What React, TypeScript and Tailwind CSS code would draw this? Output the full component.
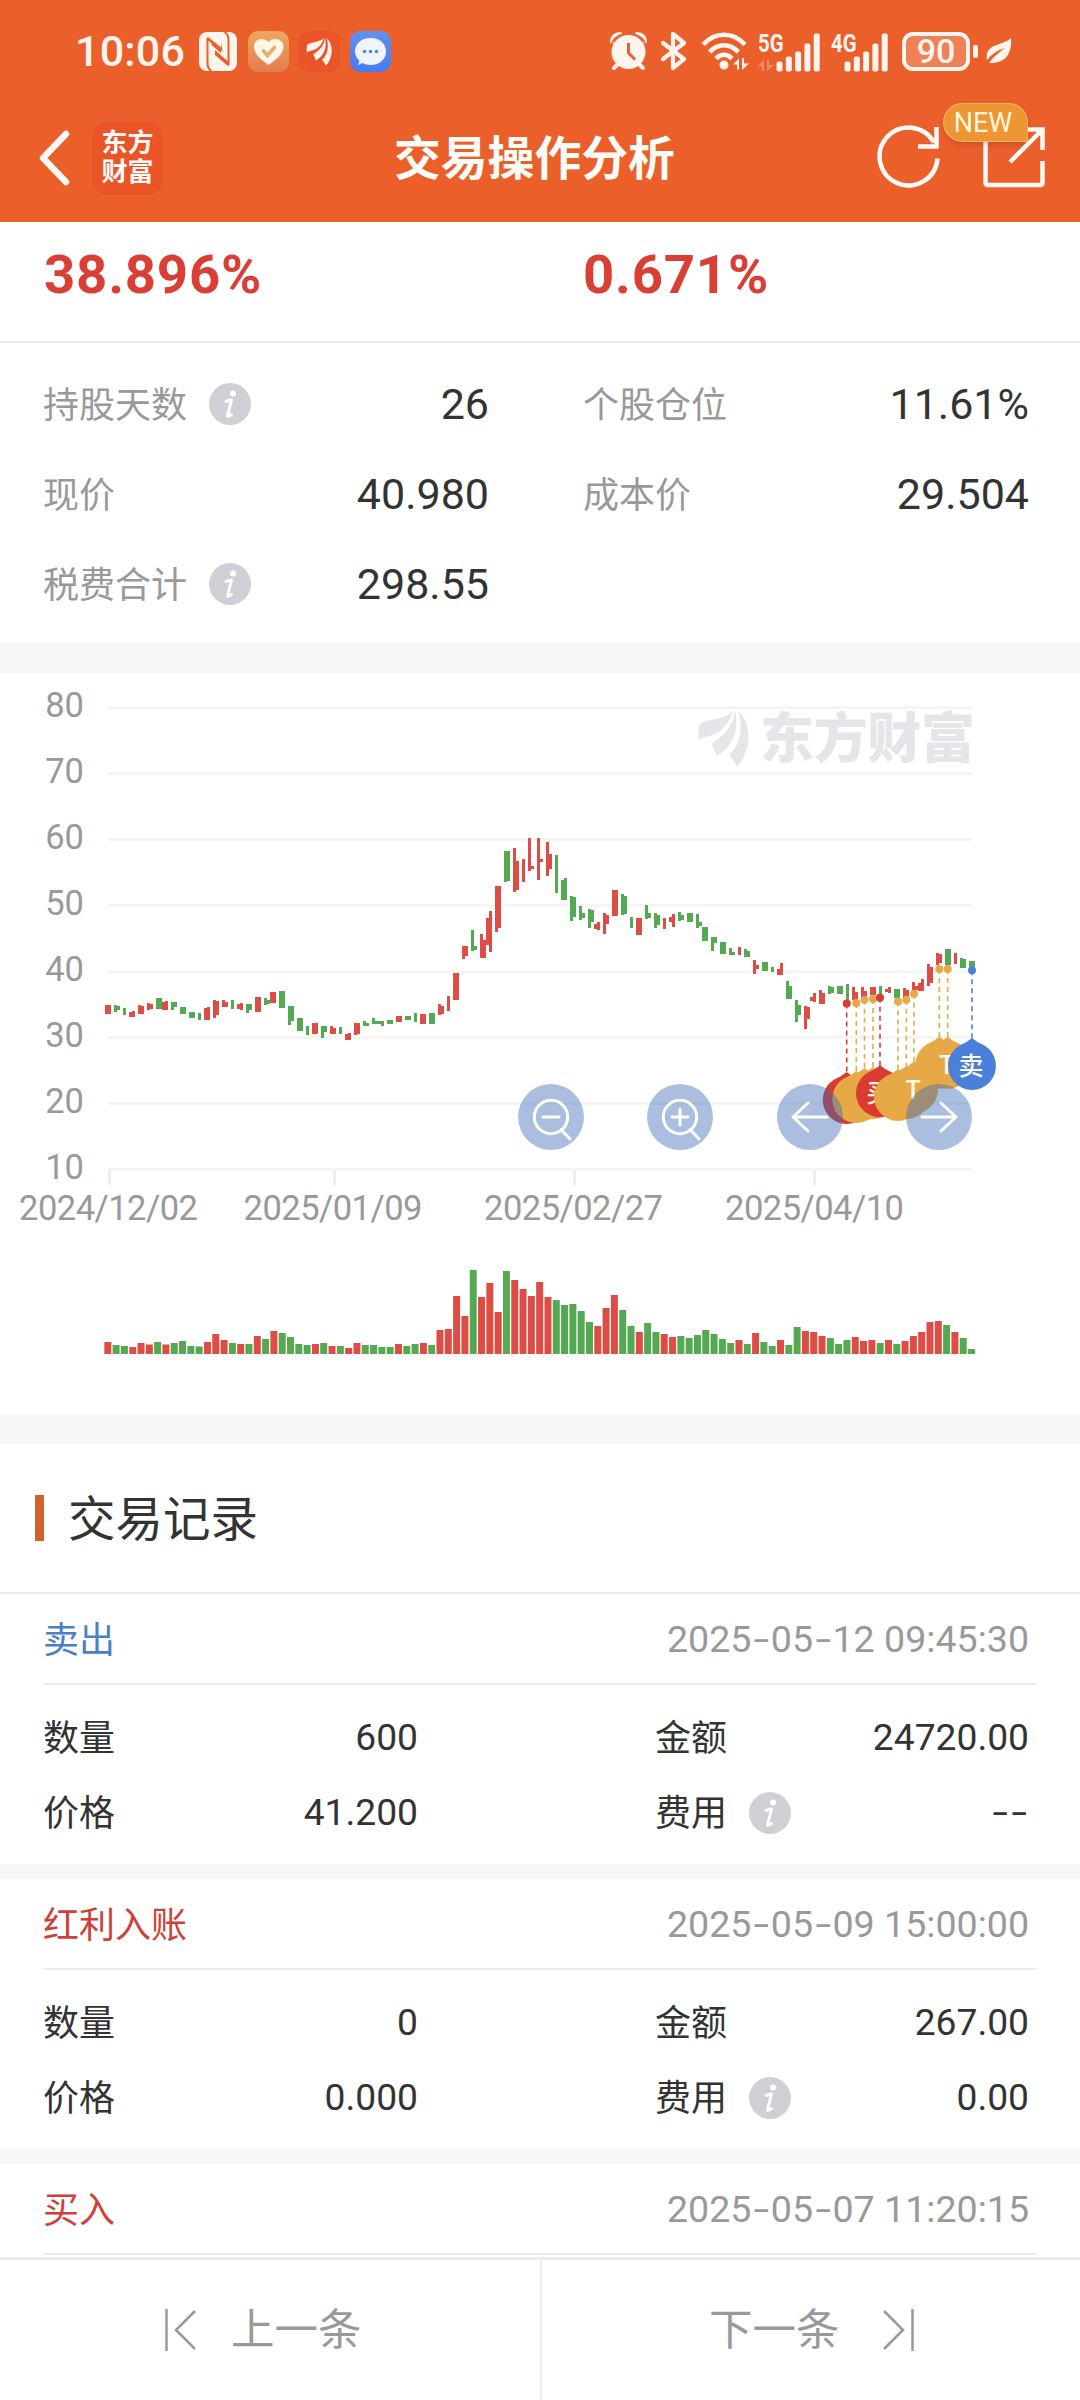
import { Fragment } from "react";

const UP = "#dd4d46";
const DOWN = "#56a953";
const ORANGE = "#e7a945";
const RED = "#da3b30";
const BLUE = "#4a80d9";

type Rect = [number, number, number, number];

// candle bodies and wicks, [x, y, width, height]
const upCandles: Rect[] = [
  [105, 1005, 6, 9],
  [129, 1012, 6, 5], [132, 1011, 3, 5],
  [138, 1006, 6, 8], [138, 1005, 3, 9],
  [147, 1004, 6, 5], [147, 1003, 3, 7],
  [162, 1002, 6, 8], [165, 1001, 3, 9],
  [204, 1008, 6, 12], [207, 1007, 3, 12],
  [213, 1000, 3, 18], [213, 1001, 6, 14],
  [222, 1002, 6, 5], [222, 1000, 3, 7],
  [237, 1004, 6, 5], [240, 1003, 3, 7],
  [255, 997, 6, 15],
  [270, 992, 6, 11],
  [312, 1023, 6, 11],
  [330, 1028, 6, 6], [330, 1026, 3, 8],
  [345, 1034, 6, 6], [348, 1033, 3, 7],
  [354, 1023, 6, 11], [354, 1023, 3, 12],
  [396, 1016, 6, 6],
  [420, 1014, 6, 10],
  [438, 1006, 6, 8], [438, 1004, 3, 11],
  [447, 996, 3, 15],
  [453, 973, 6, 27],
  [462, 946, 6, 10], [462, 946, 3, 13],
  [480, 940, 6, 18], [480, 934, 3, 24],
  [486, 918, 6, 27], [489, 911, 3, 41],
  [495, 886, 6, 42], [495, 886, 3, 46],
  [513, 848, 3, 44], [513, 861, 6, 29],
  [522, 859, 3, 23],
  [528, 838, 3, 33], [528, 866, 6, 3],
  [537, 838, 3, 42], [537, 859, 6, 3],
  [546, 842, 3, 34], [546, 854, 6, 15],
  [594, 924, 6, 5], [597, 922, 3, 8],
  [603, 915, 6, 9], [603, 913, 3, 21],
  [612, 890, 6, 26],
  [636, 918, 6, 17],
  [663, 918, 3, 11],
  [669, 917, 6, 5], [672, 914, 3, 13],
  [738, 947, 3, 8],
  [753, 960, 3, 14], [753, 965, 6, 4],
  [777, 969, 6, 6], [780, 963, 3, 12],
  [804, 1006, 3, 23], [804, 1007, 6, 12],
  [810, 997, 6, 4], [813, 993, 3, 9],
  [819, 993, 6, 11], [819, 990, 3, 14],
  [852, 992, 6, 8], [852, 987, 3, 13],
  [861, 991, 6, 8], [861, 987, 3, 12],
  [870, 987, 6, 8],
  [885, 989, 6, 3], [888, 987, 3, 6],
  [903, 990, 6, 7], [903, 988, 3, 9],
  [912, 982, 3, 9], [912, 986, 6, 4],
  [918, 983, 6, 8], [921, 979, 3, 12],
  [927, 964, 3, 22], [927, 967, 6, 16],
  [936, 954, 6, 9], [936, 953, 3, 12],
  [954, 953, 3, 11],
];

const downCandles: Rect[] = [
  [114, 1006, 6, 4], [114, 1005, 3, 7],
  [123, 1008, 3, 7],
  [156, 998, 6, 11],
  [171, 1002, 6, 5], [171, 1002, 3, 8],
  [180, 1007, 6, 7],
  [189, 1012, 6, 6],
  [198, 1013, 3, 7],
  [231, 1000, 3, 9],
  [246, 1004, 6, 6], [246, 1004, 3, 9],
  [264, 1000, 6, 4], [264, 998, 3, 7],
  [279, 991, 6, 17],
  [288, 1006, 6, 15], [288, 1006, 3, 19],
  [297, 1018, 6, 13],
  [306, 1026, 3, 9],
  [321, 1026, 6, 6], [321, 1026, 3, 12],
  [339, 1027, 3, 7],
  [363, 1023, 6, 3], [363, 1021, 3, 5],
  [372, 1018, 3, 6], [372, 1021, 9, 3],
  [378, 1021, 6, 3], [381, 1021, 3, 5],
  [387, 1020, 6, 4],
  [405, 1016, 6, 4],
  [414, 1013, 3, 9],
  [429, 1013, 6, 11],
  [471, 930, 3, 21], [474, 946, 3, 4],
  [504, 851, 6, 30], [504, 851, 3, 31],
  [555, 855, 3, 38],
  [561, 880, 6, 20], [564, 878, 3, 22],
  [570, 897, 6, 20], [570, 896, 3, 25],
  [579, 913, 6, 5], [579, 906, 3, 14],
  [588, 910, 6, 12], [588, 909, 3, 19],
  [621, 896, 6, 18], [621, 894, 3, 21],
  [630, 917, 3, 11],
  [645, 905, 3, 14], [645, 913, 6, 5],
  [654, 913, 3, 15], [654, 915, 6, 10],
  [678, 915, 6, 5], [678, 912, 3, 9],
  [687, 913, 6, 9],
  [696, 914, 3, 14], [696, 922, 6, 4],
  [702, 927, 6, 14],
  [711, 937, 6, 6], [711, 937, 3, 14],
  [720, 942, 6, 12],
  [729, 952, 6, 3], [729, 948, 3, 7],
  [744, 951, 6, 6], [744, 949, 3, 8],
  [762, 962, 6, 9],
  [771, 967, 3, 5],
  [786, 986, 6, 13], [786, 981, 3, 18],
  [795, 1000, 3, 22], [795, 1005, 6, 10],
  [828, 987, 6, 6], [828, 986, 3, 8],
  [837, 986, 6, 8],
  [846, 984, 3, 17],
  [879, 986, 3, 9],
  [894, 989, 6, 9],
  [945, 949, 6, 16],
  [960, 959, 6, 9], [960, 958, 3, 10],
  [969, 961, 6, 6],
];

// volume bar heights, u = up, d = down
const volume =
  "u12 d9 d8 u7 u11 u9.5 d12 u9.5 d11 d13 d8 d7.5 u12 u20 u14 d11 u10 d10 u18 d15 u23 d21 d17 d10 d9 u10 d11 u8 d8 u6 u11 d9 d9 d7 d7 u10 d8 d10 u11 d9 u24 u25 u58 u38 d84 u57 u71 u42 d83 u74 u65 u58 u72 u57 d54 d49 d50 d43 d32 u28 u46 u59 d44 d28 u22 d31 d22 u20 u17 d18 d16 d19 d24 d20 d15 d11 u14 d10 u21 d12 d8 u14 d9 d27 u23 u22 u18 d16 d10 d14 u17 u13 u14 d11 u14 d10 u13 u18 u22 u32 u33 d29 u22 d16 d5"
    .split(" ")
    .map((v) => ({ up: v[0] === "u", h: Number(v.slice(1)) }));

const marks = [
  { x: 846.7, dot: 1003.5, pin: 1100, color: RED, text: "买" },
  { x: 856.3, dot: 1003, pin: 1099, color: ORANGE, text: "" },
  { x: 864.5, dot: 999.7, pin: 1096, color: ORANGE, text: "" },
  { x: 873, dot: 999, pin: 1095, color: ORANGE, text: "" },
  { x: 880, dot: 997.7, pin: 1093.3, color: RED, text: "买" },
  { x: 898, dot: 1001.5, pin: 1097, color: ORANGE, text: "" },
  { x: 906.3, dot: 999.7, pin: 1095, color: ORANGE, text: "" },
  { x: 914, dot: 993.7, pin: 1089.5, color: ORANGE, text: "T" },
  { x: 939.3, dot: 969, pin: 1064.7, color: ORANGE, text: "" },
  { x: 947.7, dot: 969, pin: 1064.7, color: ORANGE, text: "T" },
  { x: 972, dot: 970.3, pin: 1066, color: BLUE, text: "卖" },
];

const records = [
  { type: "卖出", color: "text-[#4a7ec9]", time: "2025-05-12 09:45:30", count: "600", amount: "24720.00", price: "41.200", fee: "--" },
  { type: "红利入账", color: "text-[#cf4038]", time: "2025-05-09 15:00:00", count: "0", amount: "267.00", price: "0.000", fee: "0.00" },
];

function Feathers() {
  return (
    <>
      <path d="M733 711C726 719 710 719 702 722.5C698.5 724 697.500 732 699 739.600C708 734 724 738 733 711Z" />
      <path d="M735 710C734 727 722 737 711.700 743.600L716.700 756C731 747 740 734 735 710Z" />
      <path d="M738.500 711C743 727 741 744 729.300 754.500L737.300 766.500C751 750 753 726 738.500 711Z" />
    </>
  );
}

// the number font has a short hyphen, stretch it
function Dashed({ text }: { text: string }) {
  return (
    <span className="whitespace-pre">
      {text.split("").map((c, i) =>
        c === "-" ? <span key={i} className="mx-[4.500px] inline-block scale-x-150">-</span> : c
      )}
    </span>
  );
}

function InfoIcon() {
  return (
    <svg width="42" height="42" viewBox="0 0 42 42">
      <circle cx="21" cy="21" r="21" fill="#cfd0d5" />
      <circle cx="24" cy="10.500" r="3" fill="#fff" />
      <path d="M17 18.500c2.500-1 4.500-1.500 5.500-1.500l-4 15.500c0 1.500 1.500.5 4-1" fill="none" stroke="#fff" strokeWidth="3" strokeLinecap="round" strokeLinejoin="round" />
    </svg>
  );
}

function Signal({ label, className }: { label: string; className: string }) {
  return (
    <svg width="64" height="44" viewBox="0 -4 64 44" fill="#fff4ee" className={className}>
      <text x={label === "5G" ? 0 : 5} y="19" fontSize="26.500" fontWeight="700" textLength="25.500" lengthAdjust="spacingAndGlyphs">{label}</text>
      {[29, 24, 19, 11, 1].map((y, i) => (
        <rect key={y} x={18.500 + i * 9.300} y={y - 0.5} width="6" height={39 - y} rx="2" />
      ))}
      {label === "5G" && (
        <path d="M0 33l6-6.500v11.500h-2v-4.500zM9 27h2v5h5l-7 6.500z" opacity="0.3" />
      )}
    </svg>
  );
}

function StatusBar() {
  return (
    <div className="flex items-center h-[102px] pl-[75px] text-[#fff4ee]">
      <span className="w-[124px] text-[43px] font-medium leading-none tracking-[0.2px]">10:06</span>
      {/* nfc */}
      <svg width="38" height="39" viewBox="0 0 38 39">
        <rect width="38" height="39" rx="8" fill="#fff4ee" />
        <path d="M12.500 39C9 37 8.500 34.500 8.500 31V6" fill="none" stroke="#eb5f2b" strokeWidth="2" />
        <path d="M25.500 0C29 2 29.500 4.500 29.500 8v25" fill="none" stroke="#eb5f2b" strokeWidth="2" />
        <path d="M8.500 4.500L22 15.500V10l1.500 9.500L8.500 8z" fill="#eb5f2b" />
        <path d="M12.500 8.500L22 16.500v4.500L12.500 13z" fill="#eb5f2b" />
        <path d="M16 18l13.500 12v4.500L16 23z" fill="#eb5f2b" />
      </svg>
      {/* health */}
      <svg width="41" height="41" viewBox="0 0 41 41" className="ml-[11px]">
        <defs>
          <linearGradient id="heart" x1="0" y1="0" x2="0" y2="1">
            <stop offset="0" stopColor="#f2a561" />
            <stop offset="1" stopColor="#e27e4e" />
          </linearGradient>
          <linearGradient id="chat" x1="0" y1="0" x2="0" y2="1">
            <stop offset="0" stopColor="#6391ea" />
            <stop offset="1" stopColor="#437cf3" />
          </linearGradient>
        </defs>
        <rect width="41" height="41" rx="10" fill="url(#heart)" />
        <path d="M20.500 34C12 28 6 22.500 6 15.500C6 7.500 16 5.500 20.500 11C25 5.500 35.500 7.500 35.500 15.500C35.500 22.500 29 28 20.500 34Z" fill="#fff6e8" />
        <path d="M15.500 20l4 4.500 7-8" fill="none" stroke="#e8ac6c" strokeWidth="3.600" strokeLinecap="round" />
      </svg>
      <svg width="41" height="41" viewBox="0 0 41 41" className="ml-[10px]" fill="#fff4ee">
        <rect width="41" height="41" rx="10" fill="#ea5428" />
        <g transform="translate(-341.500 -348.500) scale(0.5)">
          <Feathers />
        </g>
      </svg>
      {/* messages */}
      <svg width="41" height="41" viewBox="0 0 41 41" className="ml-[10px]">
        <rect width="41" height="41" rx="10" fill="url(#chat)" />
        <path d="M20.500 7C30 7 36 13 36 20.500S30 34 20.500 34c-3.500 0-6-.7-8-2L8 34l1.500-4C7 27.500 5 24 5 20.500 5 13 11 7 20.500 7z" fill="#eef5ff" />
        <circle cx="14.500" cy="20.500" r="1.700" fill="#4d80dd" />
        <circle cx="20.500" cy="20.500" r="1.700" fill="#4d80dd" />
        <circle cx="26.500" cy="20.500" r="1.700" fill="#4d80dd" />
      </svg>
      {/* alarm */}
      <svg width="38" height="38" viewBox="0 0 38 38" className="ml-[219px]" fill="#fff4ee">
        <circle cx="18.500" cy="20" r="17" />
        <path d="M2 10C2 5 5 2 10 2M35 10C35 5 32 2 27 2M7 33l-3 3M30 33l3 3" fill="none" stroke="#fff4ee" strokeWidth="4" strokeLinecap="round" />
        <path d="M1 12.500C3 8 7 4 12 2.500M36 12.500C34 8 30 4 25 2.500" fill="none" stroke="#eb5f2b" strokeWidth="1.500" />
        <path d="M18.500 11v10l6.500 6.500" fill="none" stroke="#eb5f2b" strokeWidth="3" />
      </svg>
      <svg width="26" height="38" viewBox="0 0 26 38" className="ml-[13px]" fill="none" stroke="#fff4ee" strokeWidth="4.200" strokeLinecap="round" strokeLinejoin="round">
        <path d="M2 11l21 16-11 9V2l11 9L2 27" />
      </svg>
      <svg width="49" height="38" viewBox="0 0 49 38" className="ml-[14px]" fill="none" stroke="#fff4ee">
        <path d="M2 12.500C14.500-.5 31.500-.5 44 12.500M8.500 20c9-9 20-9 29 0M15 26.500c5-5 11-5 16 0" strokeWidth="4.600" />
        <circle cx="23" cy="33" r="4.500" fill="#fff4ee" stroke="none" />
        <path d="M32 32.500l6-6v11h-2v-5zM41 26h2v5.500h5l-7 6.500z" fill="#fff4ee" stroke="none" />
      </svg>
      <Signal label="5G" className="ml-[8px]" />
      <Signal label="4G" className="ml-[4px]" />
      <div className="flex h-[39px] w-[68px] items-center justify-center rounded-[11px] border-4 border-[#fff4ee] bg-[#f08055] ml-[12px]">
        <span className="text-[34px] font-medium leading-none">90</span>
      </div>
      <div className="h-[13px] w-[5px] rounded-[2px] bg-[#fff4ee] ml-[3px]" />
      <svg width="26" height="26" viewBox="0 0 26 26" className="ml-[8px]" fill="#fff4ee">
        <path d="M25 0C26 14 21 26 3 25C11 15 15 13 19 10C11 12 5 17 1 22C-2 5 17 8 25 0Z" />
      </svg>
    </div>
  );
}

function Header() {
  return (
    <header className="h-[222px] shrink-0 bg-[#eb5f2b]">
      <StatusBar />
      <div className="relative flex h-[112px] items-center pl-[38px]">
        <svg width="34" height="56" viewBox="0 0 34 56" fill="none" stroke="#fffaf5" strokeWidth="6.500" strokeLinecap="round" strokeLinejoin="round">
          <path d="M28 4L5 28l23 24" />
        </svg>
        <div className="ml-[20px] flex h-[73px] w-[71px] flex-col items-center justify-center rounded-[15px] bg-[#ea5528] text-[26px] font-bold leading-[29px] text-[#fffaf5]">
          <span>东方</span>
          <span>财富</span>
        </div>
        <h1 className="ml-[231px] w-[284px] whitespace-nowrap pt-[3px] text-[46.800px] font-bold text-[#fffdf8]">交易操作分析</h1>
        <svg width="66" height="66" viewBox="0 0 66 66" className="ml-[198px]" fill="none" stroke="#fffaf5" strokeWidth="4.500">
          <path d="M61.500 33.500A29 29 0 1 1 58 17.500" />
          <path d="M60.500 2v19.500H42" />
        </svg>
        <svg width="62" height="62" viewBox="0 0 62 62" className="ml-[41px]" fill="none" stroke="#fffaf5" strokeWidth="4.500">
          <path d="M2.500 11v45a2 2 0 0 0 2 2h53a2 2 0 0 0 2-2V34" />
          <path d="M40 2.500h19.500V23M59 3L27 35" />
        </svg>
        <div className="absolute left-[943px] top-[1px] flex h-[39px] w-[85px] items-center justify-center rounded-full rounded-br-[3px] border border-[#f4b565] bg-[#ee9634] pr-[5px] pt-px text-[27px] leading-none text-[#fff8dc] shadow-md">
          NEW
        </div>
      </div>
    </header>
  );
}

function SummaryItem({ label, value, info }: { label: string; value: string; info?: boolean }) {
  return (
    <div className="flex h-[90px] w-[446px] items-center">
      <span className="pt-[3px] text-[36px] text-[#999]">{label}</span>
      {info && <span className="ml-[22px]"><InfoIcon /></span>}
      <span className="ml-auto text-[43px] text-[#333]">{value}</span>
    </div>
  );
}

function Summary() {
  return (
    <section>
      <div className="flex h-[121px] items-center border-b-2 border-[#ededed] pb-[14px] pl-[44px] text-[54.500px] font-bold tracking-[0.8px] text-[#d93f35]">
        <span className="w-[539px]">38.896%</span>
        <span>0.671%</span>
      </div>
      <div className="flex h-[300px] flex-wrap content-start gap-x-[94px] pl-[43px] pt-[16px]">
        <SummaryItem label="持股天数" value="26" info />
        <SummaryItem label="个股仓位" value="11.61%" />
        <SummaryItem label="现价" value="40.980" />
        <SummaryItem label="成本价" value="29.504" />
        <SummaryItem label="税费合计" value="298.55" info />
      </div>
    </section>
  );
}

function Chart() {
  return (
    <svg width="1080" height="741" viewBox="0 673 1080 741" className="block shrink-0">
      {[80, 70, 60, 50, 40, 30, 20, 10].map((n, i) => (
        <Fragment key={n}>
          <rect x="108" y={706 + i * 66} width="864" height="3" fill="#f5f5f5" />
          <text x="84" y={716.5 + i * 66} fontSize="34.500" fill="#999" textAnchor="end">{n}</text>
        </Fragment>
      ))}

      <g fill="#e6e5ea">
        <Feathers />
        <text x="760" y="758" fontSize="54" fontWeight="900" textLength="215">东方财富</text>
      </g>

      {["2024/12/02", "2025/01/09", "2025/02/27", "2025/04/10"].map((d, i) => (
        <Fragment key={d}>
          <rect x={[108, 333, 573, 813][i]} y="1170" width="3" height="15" fill="#eee" />
          <text x={[108.5, 333, 573.5, 814.5][i]} y="1220" fontSize="34.500" fill="#999" textAnchor="middle" textLength="179">{d}</text>
        </Fragment>
      ))}

      <g shapeRendering="crispEdges">
        {upCandles.map(([x, y, w, h], i) => (
          <rect key={i} x={x} y={y} width={w} height={h} fill={UP} />
        ))}
        {downCandles.map(([x, y, w, h], i) => (
          <rect key={i} x={x} y={y} width={w} height={h} fill={DOWN} />
        ))}
      </g>
      {volume.map((v, i) => (
        <rect key={i} x={104.3 + i * 8.305} y={1354 - v.h} width="7" height={v.h} fill={v.up ? UP : DOWN} />
      ))}

      {marks.map((m) => (
        <g key={m.x}>
          <path d={`M${m.x} ${m.dot}V${m.pin - 26}`} stroke={m.color} strokeWidth="1.600" strokeDasharray="5 4" />
          <circle cx={m.x} cy={m.dot} r="4" fill={m.color} />
        </g>
      ))}
      {marks.map((m) => (
        <g key={m.x} transform={`translate(${m.x} ${m.pin})`}>
          <path d="M0 -28Q5 -23.500 12.500 -20.500A24 24 0 1 1 -12.500 -20.500Q-5 -23.500 0 -28Z" fill={m.color} />
          <text x="-1" y="9" fontSize="25" fontWeight="500" fill="#fff8ea" textAnchor="middle">{m.text}</text>
        </g>
      ))}

      {[551, 680, 810, 939].map((x, i) => (
        <g key={x} transform={`translate(${x} 1117)`} fill="none" stroke="#fff" strokeWidth="3" strokeLinecap="round">
          <circle r="33" fill="rgb(57 105 183 / 0.43)" stroke="none" />
          {i < 2 && <path d="M-8 0H8M10 12.500L19 22" />}
          {i < 2 && <circle r="16.700" />}
          {i === 1 && <path d="M0 -8V8" />}
          {i === 2 && <path d="M17 0H-17M-2 -14L-17 0L-2 14" strokeLinejoin="round" />}
          {i === 3 && <path d="M-17 0H17M2 -14L17 0L2 14" strokeLinejoin="round" />}
        </g>
      ))}
    </svg>
  );
}

function RecordHead({ type, color, time }: { type: string; color: string; time: string }) {
  return (
    <div className="mx-[43px] flex h-[91px] items-center justify-between border-b-2 border-[#ededed] pr-[8px] pt-[2px]">
      <span className={`pt-[2px] text-[36px] ${color}`}>{type}</span>
      <span className="text-[37.600px] text-[#999]"><Dashed text={time} /></span>
    </div>
  );
}

function Record({ item }: { item: (typeof records)[number] }) {
  return (
    <div className="h-[285px] shrink-0 border-b-[15px] border-[#f7f7f7] text-[#333]">
      <RecordHead type={item.type} color={item.color} time={item.time} />
      <div className="flex flex-wrap pl-[43px] pt-[15px] text-[37.200px]">
        {[
          ["数量", item.count, "金额", item.amount],
          ["价格", item.price, "费用", item.fee],
        ].map(([a, av, b, bv]) => (
          <div key={a} className="flex h-[75px] w-full items-center">
            <div className="flex w-[375px] items-center justify-between">
              <span className="pt-[3px] text-[36px]">{a}</span>
              <span>{av}</span>
            </div>
            <div className="ml-[237px] flex w-[374px] items-center">
              <span className="pt-[3px] text-[36px]">{b}</span>
              {b === "费用" && <span className="ml-[22px]"><InfoIcon /></span>}
              <span className="ml-auto"><Dashed text={bv} /></span>
            </div>
          </div>
        ))}
      </div>
    </div>
  );
}

function Footer() {
  return (
    <footer className="flex h-[143px] shrink-0 border-t-[3px] border-[#ededed] bg-white text-[43.500px] text-[#999]">
      <button className="flex w-[542px] items-center border-r-2 border-[#ededed] pb-px pl-[163px]">
        <svg width="34" height="44" viewBox="0 0 34 44" fill="none" stroke="#999" strokeWidth="2.500">
          <path d="M3.500 1v42M32 3L13 22l19 19" />
        </svg>
        <span className="ml-[34px] pt-[2px]">上一条</span>
      </button>
      <button className="flex flex-1 items-center pb-px pl-[167px]">
        <span className="pt-[2px]">下一条</span>
        <svg width="34" height="44" viewBox="0 0 34 44" className="ml-[42px]" fill="none" stroke="#999" strokeWidth="2.500">
          <path d="M30.500 1v42M2 3l19 19L2 41" />
        </svg>
      </button>
    </footer>
  );
}

export default function App() {
  return (
    <div className="flex h-[2400px] w-[1080px] flex-col overflow-hidden bg-white font-['Roboto','Noto_Sans_CJK_SC',sans-serif]">
      <Header />
      <Summary />
      <div className="h-[30px] shrink-0 bg-[#f7f7f7]" />
      <Chart />
      <div className="h-[30px] shrink-0 bg-[#f7f7f7]" />
      <section className="flex h-[813px] shrink-0 flex-col overflow-hidden">
        <div className="flex h-[150px] shrink-0 items-center border-b-2 border-[#ededed] pl-[35px]">
          <span className="h-[46px] w-[9px] bg-[#d2622c]" />
          <h2 className="ml-[24px] pt-[5px] text-[47.500px] text-[#333]">交易记录</h2>
        </div>
        {records.map((r) => (
          <Record key={r.time} item={r} />
        ))}
        <RecordHead type="买入" color="text-[#cf4038]" time="2025-05-07 11:20:15" />
      </section>
      <Footer />
    </div>
  );
}
